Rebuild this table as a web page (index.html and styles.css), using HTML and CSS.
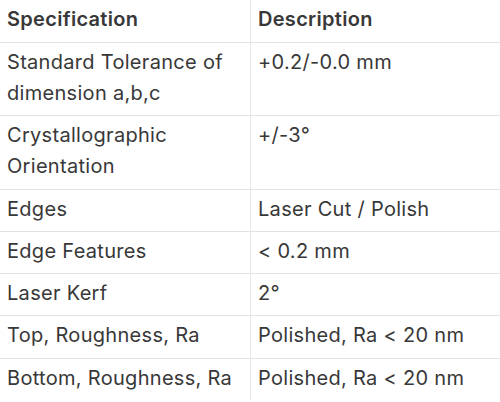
FILE: index.html
```html
<!DOCTYPE html>
<html>
<head>
<meta charset="utf-8">
<link rel="stylesheet" href="styles.css">
</head>
<body>
<table class="spec">
  <thead>
    <tr><th class="c1">Specification</th><th class="c2">Description</th></tr>
  </thead>
  <tbody>
    <tr><td class="c1">Standard Tolerance of dimension a,b,c</td><td class="c2">+0.2/-0.0 mm</td></tr>
    <tr><td class="c1">Crystallographic Orientation</td><td class="c2">+/-3°</td></tr>
    <tr><td class="c1">Edges</td><td class="c2">Laser Cut / Polish</td></tr>
    <tr><td class="c1">Edge Features</td><td class="c2">&lt; 0.2 mm</td></tr>
    <tr><td class="c1">Laser Kerf</td><td class="c2">2°</td></tr>
    <tr><td class="c1">Top, Roughness, Ra</td><td class="c2">Polished, Ra &lt; 20 nm</td></tr>
    <tr><td class="c1">Bottom, Roughness, Ra</td><td class="c2">Polished, Ra &lt; 20 nm</td></tr>
  </tbody>
</table>
</body>
</html>
```
FILE: styles.css
```css
html, body {
  margin: 0;
  padding: 0;
  background: #ffffff;
}
body {
  font-family: Inter, "Open Sans", sans-serif;
  color: #383838;
}
.spec {
  width: 500px;
  border-collapse: collapse;
  table-layout: fixed;
}
.spec th, .spec td {
  font-size: 20px;
  letter-spacing: 0.3px;
  line-height: 31px;
  padding: 4px 7px 6.3px 7px;
  text-align: left;
  vertical-align: top;
  border-top: 1px solid #e3e3e3;
}
.spec th {
  font-weight: 600;
  border-top: none;
  padding-bottom: 7px;
}
.spec .c1 {
  width: 236px;
  border-right: 1px solid #e8e8e8;
}
```
